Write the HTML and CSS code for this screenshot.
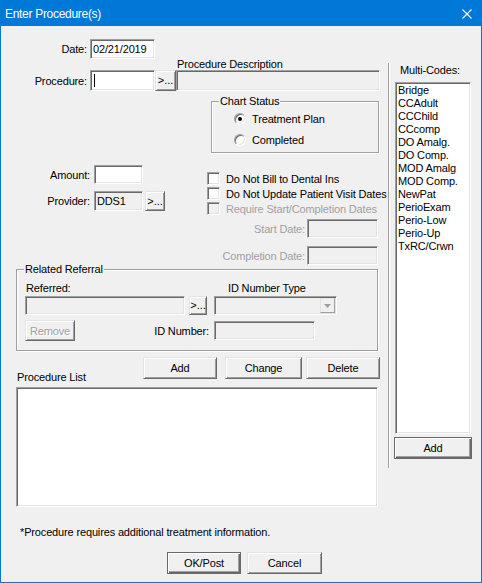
FILE: index.html
```html
<!DOCTYPE html>
<html>
<head>
<meta charset="utf-8">
<title>Enter Procedure(s)</title>
<link rel="stylesheet" href="styles.css">
</head>
<body>
<div class="window">
  <div class="titlebar">
    <span class="title">Enter Procedure(s)</span>
    <svg class="close" width="10" height="10" viewBox="0 0 10 10"><path d="M0.5 0.5 L9.5 9.5 M9.5 0.5 L0.5 9.5" stroke="#fff" stroke-width="1.1" fill="none"/></svg>
  </div>
  <div class="client">
    <div class="main">
      <div class="row row-date">
        <div class="lbl lbl-a">Date:</div>
        <div class="field w-date">02/21/2019</div>
      </div>
      <div class="desc-label">Procedure Description</div>
      <div class="row row-proc">
        <div class="lbl lbl-a">Procedure:</div>
        <div class="field w-proc"><span class="caret"></span></div>
        <div class="btn btn-dots w-dots1">&gt;...</div>
        <div class="field disabled w-desc"></div>
      </div>

      <div class="group chart">
        <span class="group-title">Chart Status</span>
        <div class="radio-row"><span class="radio checked"></span><span>Treatment Plan</span></div>
        <div class="radio-row"><span class="radio"></span><span>Completed</span></div>
      </div>

      <div class="mid">
        <div class="mid-left">
          <div class="row row-amount">
            <div class="lbl lbl-b">Amount:</div>
            <div class="field w-amt"></div>
          </div>
          <div class="row row-prov">
            <div class="lbl lbl-b">Provider:</div>
            <div class="field disabled w-amt">DDS1</div>
            <div class="btn btn-dots w-dots2">&gt;...</div>
          </div>
        </div>
        <div class="mid-right">
          <div class="cb-row"><span class="cb"></span><span>Do Not Bill to Dental Ins</span></div>
          <div class="cb-row"><span class="cb"></span><span>Do Not Update Patient Visit Dates</span></div>
          <div class="cb-row dis"><span class="cb disabled"></span><span>Require Start/Completion Dates</span></div>
          <div class="date-row first"><span class="dis-text">Start Date:</span><div class="field disabled w-sdate"></div></div>
          <div class="date-row"><span class="dis-text">Completion Date:</span><div class="field disabled w-sdate"></div></div>
        </div>
      </div>

      <div class="group referral">
        <span class="group-title">Related Referral</span>
        <div class="ref-labels">
          <span class="ref-l1">Referred:</span>
          <span>ID Number Type</span>
        </div>
        <div class="ref-row2">
          <div class="field disabled w-ref"></div>
          <div class="btn btn-dots w-dots3">&gt;...</div>
          <div class="field disabled combo">
            <span class="combo-btn"><svg width="7" height="4" viewBox="0 0 7 4"><path d="M0 0 H7 L3.5 4 Z" fill="#a0a0a0"/></svg></span>
          </div>
        </div>
        <div class="ref-row3">
          <div class="btn btn-disabled w-remove">Remove</div>
          <div class="lbl-id">ID Number:</div>
          <div class="field disabled w-id"></div>
        </div>
      </div>

      <div class="btn-row">
        <div class="btn w-add">Add</div>
        <div class="btn w-change">Change</div>
        <div class="btn w-delete">Delete</div>
      </div>
      <div class="list-label">Procedure List</div>
      <div class="field proc-list"></div>
      <div class="footnote">*Procedure requires additional treatment information.</div>
      <div class="bottom-row">
        <div class="btn default w-ok">OK/Post</div>
        <div class="btn w-cancel">Cancel</div>
      </div>
    </div>
    <div class="sep"></div>
    <div class="side">
      <div class="mc-label">Multi-Codes:</div>
      <div class="field mc-list">
        <div>Bridge</div>
        <div>CCAdult</div>
        <div>CCChild</div>
        <div>CCcomp</div>
        <div>DO Amalg.</div>
        <div>DO Comp.</div>
        <div>MOD Amalg</div>
        <div>MOD Comp.</div>
        <div>NewPat</div>
        <div>PerioExam</div>
        <div>Perio-Low</div>
        <div>Perio-Up</div>
        <div>TxRC/Crwn</div>
      </div>
      <div class="btn default mc-add">Add</div>
    </div>
  </div>
</div>
</body>
</html>
```
FILE: styles.css
```css
* { box-sizing: border-box; }
html, body { margin: 0; padding: 0; }
body {
  width: 482px;
  height: 583px;
  overflow: hidden;
  background: #f0f0f0;
  font-family: "Liberation Sans", Arial, sans-serif;
  font-size: 11px;
  letter-spacing: -0.15px;
  color: #000;
}
.window {
  width: 482px;
  height: 583px;
  border: 1px solid #0078d7;
  display: flex;
  flex-direction: column;
}
.titlebar {
  height: 25px;
  flex: none;
  background: #0078d7;
  color: #fff;
  display: flex;
  align-items: center;
  justify-content: space-between;
  padding: 0 9px 0 4px;
  font-size: 12px;
  letter-spacing: -0.3px;
}
.close { display: block; margin-top: 1px; }
.client { display: flex; flex: 1; }
.main { width: 387px; flex: none; }
.sep {
  width: 2px;
  height: 405px;
  margin-top: 37px;
  border-left: 1px solid #a0a0a0;
  border-right: 1px solid #fff;
  flex: none;
}
.side { width: 91px; flex: none; }

/* generic controls */
.row { display: flex; align-items: center; }
.lbl { text-align: right; flex: none; }
.lbl-a { width: 89px; padding-right: 3px; }
.lbl-b { width: 93px; padding-right: 4px; }
.field {
  background: #fff;
  border: 1px solid;
  border-color: #a0a0a0 #fff #fff #a0a0a0;
  box-shadow: inset 1px 1px 0 #696969, inset -1px -1px 0 #e3e3e3;
  padding-left: 2px;
  flex: none;
  white-space: nowrap;
}
.field.disabled { background: #f0f0f0; }
.btn {
  background: #f0f0f0;
  border: 1px solid;
  border-color: #e3e3e3 #696969 #696969 #e3e3e3;
  box-shadow: inset 1px 1px 0 #fff, inset -1px -1px 0 #a0a0a0;
  display: flex;
  align-items: center;
  justify-content: center;
  flex: none;
}
.btn.default {
  border: 1px solid #696969;
  box-shadow: inset 1px 1px 0 #fff, inset -1px -1px 0 #696969, inset -2px -2px 0 #a0a0a0;
}
.btn-dots { letter-spacing: 0; padding-bottom: 1px; }
.btn-disabled { color: #a0a0a0; text-shadow: 1px 1px 0 #fff; }
.dis, .dis-text { color: #a0a0a0; }

/* date & procedure */
.row-date { margin-top: 13px; height: 20px; }
.w-date { width: 65px; height: 20px; line-height: 18px; }
.desc-label { margin-top: -1px; margin-left: 176px; height: 12px; line-height: 12px; }
.row-proc { height: 21px; }
.w-proc { width: 65px; height: 21px; display: flex; align-items: center; }
.caret { display: block; width: 1px; height: 13px; background: #000; margin-left: 1px; }
.w-dots1 { width: 21px; height: 21px; }
.w-desc { width: 204px; height: 21px; }

/* group boxes */
.group {
  position: relative;
  border: 1px solid #a0a0a0;
  box-shadow: inset 1px 1px 0 #fff, 1px 1px 0 #fff;
}
.group-title {
  position: absolute;
  top: -7px;
  left: 7px;
  padding: 0 1px;
  line-height: 12px;
  background: #f0f0f0;
}
.chart {
  margin-top: 10px;
  margin-left: 210px;
  width: 168px;
  height: 52px;
  padding: 6px 0 0 22px;
}
.radio-row {
  height: 21px;
  display: flex;
  align-items: center;
  gap: 6px;
}
.radio {
  width: 12px;
  height: 12px;
  border-radius: 50%;
  background: #fff;
  border: 1px solid;
  border-color: #a0a0a0 #fff #fff #a0a0a0;
  box-shadow: inset 1px 1px 0 #696969, inset -1px -1px 0 #e3e3e3;
  display: flex;
  align-items: center;
  justify-content: center;
  flex: none;
}
.radio.checked::after {
  content: "";
  width: 4px;
  height: 4px;
  border-radius: 50%;
  background: #000;
}

/* middle section */
.mid { display: flex; margin-top: 12px; }
.mid-left { width: 206px; flex: none; }
.row-amount { height: 19px; }
.w-amt { width: 49px; height: 19px; line-height: 17px; }
.row-prov { height: 20px; margin-top: 7px; }
.row-prov .w-amt { height: 20px; line-height: 18px; }
.w-dots2 { width: 20px; height: 20px; margin-left: 2px; }
.mid-right { width: 171px; flex: none; padding-top: 6px; }
.cb-row {
  height: 15px;
  display: flex;
  align-items: center;
  gap: 6px;
  white-space: nowrap;
}
.cb {
  width: 13px;
  height: 13px;
  flex: none;
  background: #fff;
  border: 1px solid;
  border-color: #a0a0a0 #fff #fff #a0a0a0;
  box-shadow: inset 1px 1px 0 #696969, inset -1px -1px 0 #e3e3e3;
}
.cb.disabled { background: #f0f0f0; }
.date-row {
  height: 19px;
  display: flex;
  align-items: center;
  justify-content: flex-end;
  margin-top: 8px;
  gap: 2px;
}
.date-row.first { margin-top: 3px; }
.w-sdate { width: 71px; height: 19px; }

/* referral */
.referral {
  margin-top: 4px;
  margin-left: 15px;
  width: 362px;
  height: 82px;
  padding: 12px 0 0 8px;
}
.ref-labels { display: flex; height: 12px; line-height: 12px; }
.ref-l1 { width: 203px; padding-left: 1px; }
.ref-row2 { display: flex; margin-top: 2px; height: 19px; }
.w-ref { width: 160px; height: 19px; }
.w-dots3 { width: 18px; height: 19px; margin-left: 4px; }
.combo {
  width: 123px;
  height: 19px;
  margin-left: 7px;
  display: flex;
  justify-content: flex-end;
  align-items: center;
  padding: 0 1px 0 0;
}
.combo-btn {
  width: 15px;
  height: 15px;
  background: #f0f0f0;
  border: 1px solid;
  border-color: #e3e3e3 #a0a0a0 #a0a0a0 #e3e3e3;
  display: flex;
  align-items: center;
  justify-content: center;
}
.combo-btn svg { display: block; }
.ref-row3 { display: flex; align-items: center; margin-top: 5px; height: 21px; }
.w-remove { width: 50px; height: 21px; }
.lbl-id { width: 139px; text-align: right; padding-right: 5px; }
.w-id { width: 101px; height: 19px; }

/* buttons and list */
.btn-row { display: flex; margin-top: 6px; padding-left: 142px; height: 22px; }
.btn-row .btn { height: 22px; }
.w-add { width: 74px; }
.w-change { width: 77px; margin-left: 8px; }
.w-delete { width: 74px; margin-left: 4px; }
.list-label { margin-top: -8px; padding-left: 16px; height: 12px; line-height: 12px; }
.proc-list { margin-top: 4px; margin-left: 15px; width: 362px; height: 120px; }
.footnote { margin-top: 19px; padding-left: 19px; line-height: 12px; height: 12px; }
.bottom-row { display: flex; margin-top: 14px; padding-left: 166px; }
.w-ok { width: 74px; height: 22px; }
.w-cancel { width: 75px; height: 22px; margin-left: 6px; }

/* multi-codes */
.mc-label { margin-top: 38px; padding-left: 10px; line-height: 12px; height: 12px; }
.mc-list {
  margin-top: 6px;
  margin-left: 5px;
  width: 76px;
  height: 352px;
  padding-top: 1px;
  line-height: 13px;
}
.mc-add { margin-top: 3px; margin-left: 4px; width: 78px; height: 22px; }
```
